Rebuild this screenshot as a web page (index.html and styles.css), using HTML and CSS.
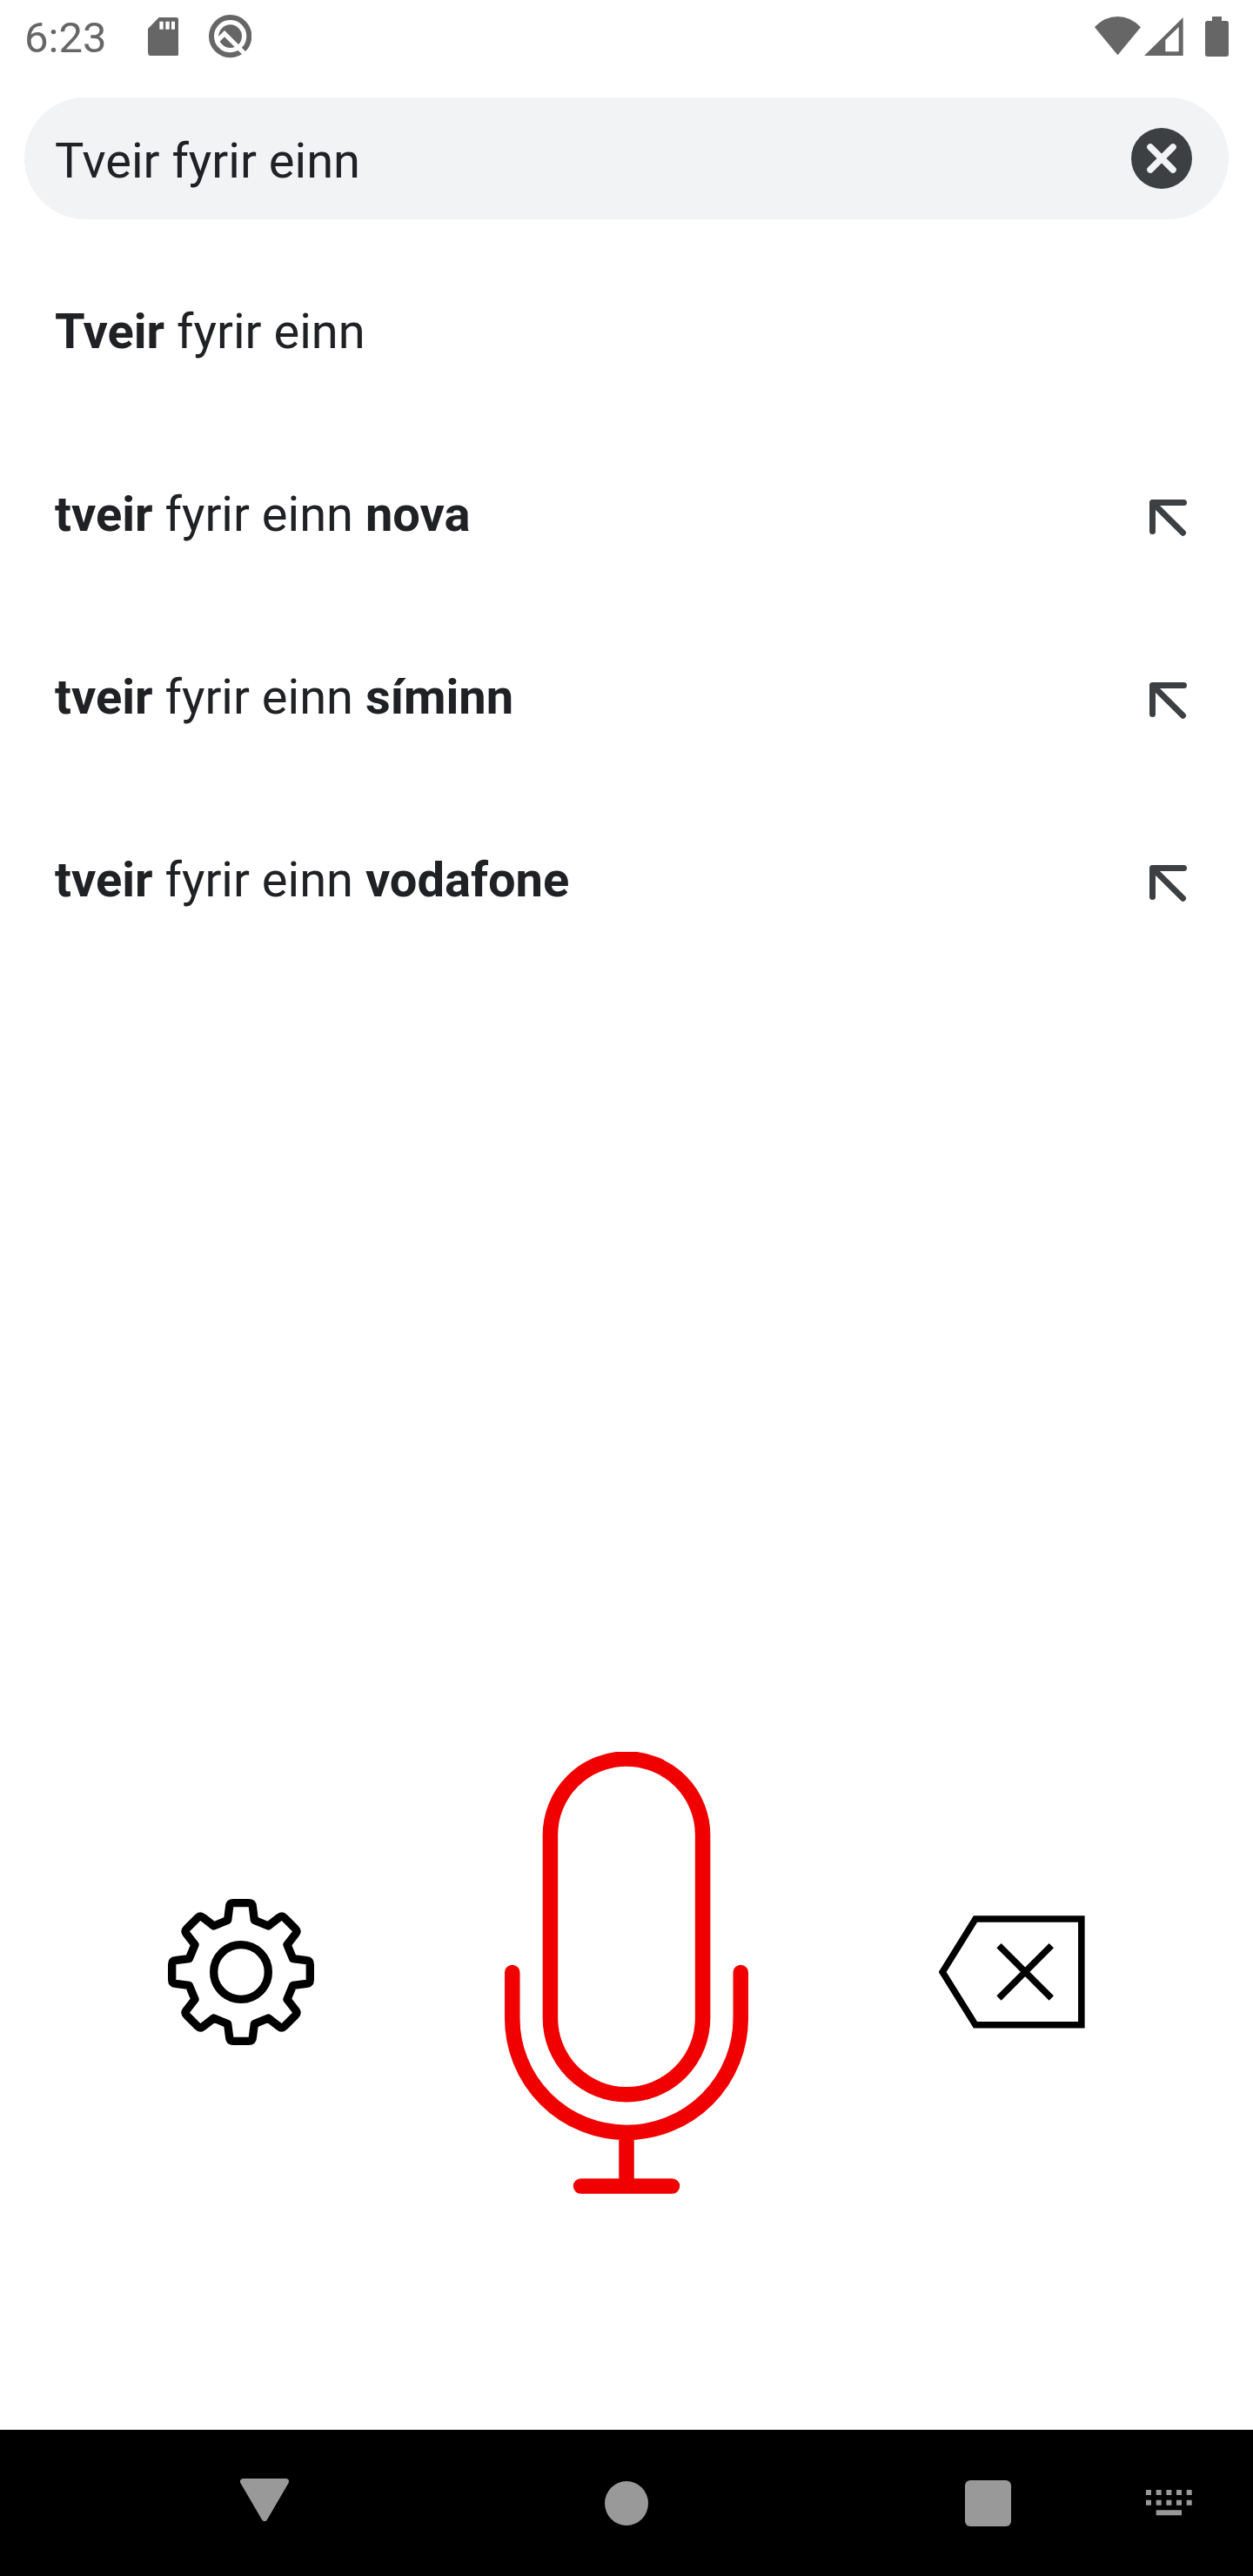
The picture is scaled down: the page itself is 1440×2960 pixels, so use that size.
FILE: index.html
```html
<!DOCTYPE html>
<html lang="is">
<head>
<meta charset="utf-8">
<title>Tveir fyrir einn</title>
<link rel="stylesheet" href="styles.css">
</head>
<body>
<div class="screen">
  <header class="status">
    <span class="clock">6:23</span>
    <svg class="sd" viewBox="509 60 107 133" width="35.7" height="44.3"><path fill="currentColor" fill-rule="evenodd" d="M547 60H604Q616 60 616 72V181Q616 193 604 193H521Q509 193 509 181V99ZM549 74V101H562V74ZM570 74V101H583V74ZM590 74V101H602V74Z"/></svg>
    <svg class="beta" viewBox="719 52 148 148" width="49.3" height="49.3"><circle cx="793" cy="126" r="65" fill="none" stroke="currentColor" stroke-width="18"/><circle cx="793" cy="126" r="40" fill="currentColor"/><path d="M746 144L773 117L842 186" fill="none" stroke="#fff" stroke-width="15"/></svg>
    <span class="spacer"></span>
    <svg class="wifi" viewBox="114 57 159 133" width="53" height="44.3"><path fill="currentColor" d="M114 94Q148 57 193.500 57T273 94L193.500 190Z"/></svg>
    <svg class="signal" viewBox="286 59 134 132" width="44.7" height="44"><path fill="currentColor" fill-rule="evenodd" d="M420 59V191H286ZM405 92L359 137V177H405Z"/></svg>
    <svg class="battery" viewBox="495 57 81 138" width="27" height="46"><path fill="currentColor" d="M519 57H552V72H568Q576 72 576 80V186Q576 195 568 195H503Q495 195 495 186V80Q495 72 503 72H519Z"/></svg>
  </header>
  <div class="search">
    <span class="query">Tveir fyrir einn</span>
    <svg viewBox="0 0 70 70" width="70" height="70"><circle cx="35" cy="35" r="35" fill="#3c4043"/><path d="M22 22L48 48M48 22L22 48" stroke="#f1f3f4" stroke-width="7.600" stroke-linecap="round"/></svg>
  </div>
  <ul class="suggestions">
    <li><span><b>Tveir</b> fyrir einn</span></li>
    <li><span><b>tveir</b> fyrir einn <b>nova</b></span><svg class="arrow" viewBox="0 0 44 42"><path d="M3.500 36.500V3.500H39.500M3.500 3.500L38.500 38.300"/></svg></li>
    <li><span><b>tveir</b> fyrir einn <b>síminn</b></span><svg class="arrow" viewBox="0 0 44 42"><path d="M3.500 36.500V3.500H39.500M3.500 3.500L38.500 38.300"/></svg></li>
    <li><span><b>tveir</b> fyrir einn <b>vodafone</b></span><svg class="arrow" viewBox="0 0 44 42"><path d="M3.500 36.500V3.500H39.500M3.500 3.500L38.500 38.300"/></svg></li>
  </ul>
  <div class="controls">
    <svg class="side" viewBox="-252 -252 504 504"><g fill="none" stroke="#000" stroke-width="28" stroke-linejoin="round"><circle r="94"/><path d="M-46-179L-40-226Q-39-238-26-238L26-238Q39-238 40-226L46-179L94-159L131.500-188.100Q140.700-195.900 150-186.700L186.700-150Q195.900-140.700 188.100-131.500L159-94L179-46L226-40Q238-39 238-26L238 26Q238 39 226 40L179 46L159 94L188.100 131.500Q195.900 140.700 186.700 150L150 186.700Q140.700 195.900 131.500 188.100L94 159L46 179L40 226Q39 238 26 238L-26 238Q-39 238-40 226L-46 179L-94 159L-131.500 188.100Q-140.700 195.900-150 186.700L-186.700 150Q-195.900 140.700-188.100 131.500L-159 94L-179 46L-226 40Q-238 39-238 26L-238-26Q-238-39-226-40L-179-46L-159-94L-188.100-131.500Q-195.900-140.700-186.700-150L-150-186.700Q-140.700-195.900-131.500-188.100L-94-159Z"/></g></svg>
    <svg class="mic" viewBox="0 0 280 508"><g fill="none" stroke="#f00000" stroke-width="17.500" stroke-linecap="round"><rect x="52.400" y="8" width="175.200" height="385.700" rx="87.600"/><path d="M8.750 253.400V306.200A131.250 131.250 0 0 0 271.250 306.200V253.400M140 437.500V499M87.500 499H192.500"/></g></svg>
    <svg class="side" viewBox="58 6 504 504"><path d="M184 75H549.500V440.500H184L70.500 258ZM265 167L446 348M446 167L265 348" fill="none" stroke="#000" stroke-width="22.700"/></svg>
  </div>
  <nav class="navbar">
    <svg class="back" viewBox="0 0 56 49" width="56" height="49"><path d="M3.500 3.500H52.500L28 45.500Z" fill="#999" stroke="#999" stroke-width="7" stroke-linejoin="round"/></svg>
    <span class="home"></span>
    <span class="recent"></span>
    <svg class="keys" viewBox="0 0 54 30" width="54" height="30"><path d="M0 3H6M11.700 3H17.700M23.400 3H29.400M35 3H41M46.700 3H52.700M0 14.700H6M11.700 14.700H17.700M23.400 14.700H29.400M35 14.700H41M46.700 14.700H52.700M11.700 26.300H41" stroke="#999" stroke-width="6"/></svg>
  </nav>
</div>
</body>
</html>
```
FILE: styles.css
```css
* { box-sizing: border-box; }
body { margin: 0; background: #fff; }
svg { display: block; flex: none; }
.screen {
  width: 1440px;
  height: 2960px;
  display: flex;
  flex-direction: column;
  font-family: Roboto, sans-serif;
  color: #202124;
}
.status {
  height: 112px;
  display: flex;
  align-items: flex-start;
  padding: 0 28px;
  color: #666;
}
.clock { width: 141.7px; font-size: 49px; line-height: 58px; padding-top: 15px; }
.sd { margin-top: 20px; }
.beta { margin: 17.3px 0 0 34.3px; }
.spacer { flex: 1; }
.wifi { margin-top: 19px; }
.signal { margin: 19.7px 0 0 4.3px; }
.battery { margin: 19px 0 0 25px; }
.search {
  height: 140px;
  margin: 0 28px;
  padding: 0 42px 0 35px;
  border-radius: 70px;
  background: #f1f3f4;
  display: flex;
  align-items: center;
  justify-content: space-between;
}
.query { font-size: 56px; line-height: 66px; padding-top: 6px; }
.suggestions {
  list-style: none;
  margin: 28px 0 0;
  padding: 0 75px 0 63px;
}
.suggestions li {
  height: 210px;
  display: flex;
  align-items: center;
  justify-content: space-between;
  font-size: 56px;
  line-height: 66px;
}
.suggestions span { padding-bottom: 8px; }
.arrow {
  width: 44px;
  height: 42px;
  fill: none;
  stroke: #3c4043;
  stroke-width: 7;
  stroke-linecap: round;
  stroke-linejoin: round;
}
.controls {
  margin-top: auto;
  margin-bottom: 271px;
  padding: 0 193px;
  display: flex;
  align-items: center;
  justify-content: space-between;
}
.side { width: 168px; height: 168px; margin-bottom: 2px; }
.mic { width: 280px; height: 508px; }
.navbar {
  height: 168px;
  background: #000;
  display: flex;
  align-items: center;
  padding: 0 69px 0 276px;
}
.back { margin-bottom: 7px; }
.home { width: 50px; height: 51px; border-radius: 50%; background: #999; margin-left: 363px; }
.recent { width: 53px; height: 53px; border-radius: 6px; background: #999; margin-left: 363.500px; }
.keys { margin-left: 155.500px; }
```
